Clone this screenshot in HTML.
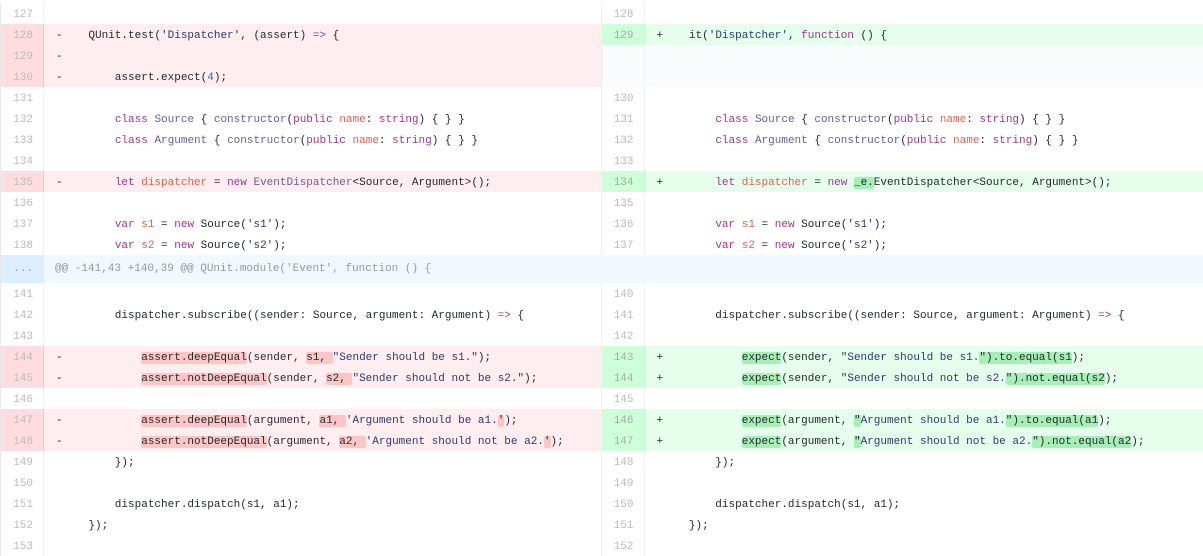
<!DOCTYPE html>
<html><head><meta charset="utf-8"><style>
*{margin:0;padding:0;box-sizing:border-box}
body{width:1203px;height:555px;overflow:hidden;background:#fff;font-family:"Liberation Mono","DejaVu Sans Mono",monospace;font-size:11px;color:#24292e}
.wrap{position:absolute;top:3px;left:0;width:1203px;border-left:1px solid #e8e8e8}
.row{display:flex;height:21px;line-height:25px;overflow:hidden}
.row.hk{height:28px;line-height:29px;background:#f1f8ff}
.half{position:relative;display:flex;width:601px;border-right:1px solid #eee}
.half.r{width:602px;border-right:none}
.g{width:43px;flex:none;text-align:right;padding-right:10px;color:#bbb;border-right:1px solid #eee}
.half.r .g{width:43px}
.c{position:relative;flex:1;padding-left:18px;white-space:pre}
.m{position:absolute;left:12px;top:0}
.del .g{background:#ffdce0;border-right-color:#f5c6c6;color:#bbb}
.del .c{background:#ffeef0}
.add .g{background:#cdffd8;border-right-color:#bef5cb;color:#aaa}
.add .c{background:#e6ffed}
.emp .g,.emp .c{background:#fafbfc}
.emp .g{border-right-color:#f2f2f2}
.hk .g{background:#dbedff;color:#999;border-right:1px solid #dbedff}
.hk .c{color:#999;padding-left:11px}
.k{color:#a0358f}.v{color:#e0604a}.t{color:#6a5c9a}.s{color:#2b3a6e}.n{color:#1e6fc0}.o{color:#a0358f}
.hd{background:#fdc6c6;border-radius:2px}
.ha{background:#a6f0b5;border-radius:2px}
</style></head><body><div class="wrap">

<div class="row"><div class="half"><div class="g">127</div><div class="c"></div></div><div class="half r"><div class="g">128</div><div class="c"></div></div></div>

<div class="row"><div class="half del"><div class="g">128</div><div class="c"><span class="m">-</span>    QUnit.test(<span class="s">'Dispatcher'</span>, (assert) <span class="o">=&gt;</span> {</div></div><div class="half r add"><div class="g">129</div><div class="c"><span class="m">+</span>    it(<span class="s">'Dispatcher'</span>, <span class="k">function</span> () {</div></div></div>

<div class="row"><div class="half del"><div class="g">129</div><div class="c"><span class="m">-</span></div></div><div class="half r emp"><div class="g"></div><div class="c"></div></div></div>

<div class="row"><div class="half del"><div class="g">130</div><div class="c"><span class="m">-</span>        assert.expect(<span class="n">4</span>);</div></div><div class="half r emp"><div class="g"></div><div class="c"></div></div></div>

<div class="row"><div class="half"><div class="g">131</div><div class="c"></div></div><div class="half r"><div class="g">130</div><div class="c"></div></div></div>

<div class="row"><div class="half"><div class="g">132</div><div class="c">        <span class="k">class</span> <span class="t">Source</span> { <span class="t">constructor</span>(<span class="k">public</span> <span class="v">name</span>: <span class="k">string</span>) { } }</div></div><div class="half r"><div class="g">131</div><div class="c">        <span class="k">class</span> <span class="t">Source</span> { <span class="t">constructor</span>(<span class="k">public</span> <span class="v">name</span>: <span class="k">string</span>) { } }</div></div></div>

<div class="row"><div class="half"><div class="g">133</div><div class="c">        <span class="k">class</span> <span class="t">Argument</span> { <span class="t">constructor</span>(<span class="k">public</span> <span class="v">name</span>: <span class="k">string</span>) { } }</div></div><div class="half r"><div class="g">132</div><div class="c">        <span class="k">class</span> <span class="t">Argument</span> { <span class="t">constructor</span>(<span class="k">public</span> <span class="v">name</span>: <span class="k">string</span>) { } }</div></div></div>

<div class="row"><div class="half"><div class="g">134</div><div class="c"></div></div><div class="half r"><div class="g">133</div><div class="c"></div></div></div>

<div class="row"><div class="half del"><div class="g">135</div><div class="c"><span class="m">-</span>        <span class="k">let</span> <span class="v">dispatcher</span> = <span class="k">new</span> <span class="t">EventDispatcher</span>&lt;Source, Argument&gt;();</div></div><div class="half r add"><div class="g">134</div><div class="c"><span class="m">+</span>        <span class="k">let</span> <span class="v">dispatcher</span> = <span class="k">new</span> <span class="ha">_e.</span>EventDispatcher&lt;Source, Argument&gt;();</div></div></div>

<div class="row"><div class="half"><div class="g">136</div><div class="c"></div></div><div class="half r"><div class="g">135</div><div class="c"></div></div></div>

<div class="row"><div class="half"><div class="g">137</div><div class="c">        <span class="k">var</span> <span class="v">s1</span> = <span class="k">new</span> Source(<span class="s">'s1'</span>);</div></div><div class="half r"><div class="g">136</div><div class="c">        <span class="k">var</span> <span class="v">s1</span> = <span class="k">new</span> Source(<span class="s">'s1'</span>);</div></div></div>

<div class="row"><div class="half"><div class="g">138</div><div class="c">        <span class="k">var</span> <span class="v">s2</span> = <span class="k">new</span> Source(<span class="s">'s2'</span>);</div></div><div class="half r"><div class="g">137</div><div class="c">        <span class="k">var</span> <span class="v">s2</span> = <span class="k">new</span> Source(<span class="s">'s2'</span>);</div></div></div>

<div class="row hk"><div class="half" style="border-right:none"><div class="g">...</div><div class="c">@@ -141,43 +140,39 @@ QUnit.module('Event', function () {</div></div><div class="half r"></div></div>

<div class="row"><div class="half"><div class="g">141</div><div class="c"></div></div><div class="half r"><div class="g">140</div><div class="c"></div></div></div>

<div class="row"><div class="half"><div class="g">142</div><div class="c">        dispatcher.subscribe((sender: Source, argument: Argument) <span class="o">=&gt;</span> {</div></div><div class="half r"><div class="g">141</div><div class="c">        dispatcher.subscribe((sender: Source, argument: Argument) <span class="o">=&gt;</span> {</div></div></div>

<div class="row"><div class="half"><div class="g">143</div><div class="c"></div></div><div class="half r"><div class="g">142</div><div class="c"></div></div></div>

<div class="row"><div class="half del"><div class="g">144</div><div class="c"><span class="m">-</span>            <span class="hd">assert.deepEqual</span>(sender, <span class="hd">s1, </span><span class="s">"Sender should be s1."</span>);</div></div><div class="half r add"><div class="g">143</div><div class="c"><span class="m">+</span>            <span class="ha">expect</span>(sender, <span class="s">"Sender should be s1.</span><span class="ha">").to.equal(s1</span>);</div></div></div>

<div class="row"><div class="half del"><div class="g">145</div><div class="c"><span class="m">-</span>            <span class="hd">assert.notDeepEqual</span>(sender, <span class="hd">s2, </span><span class="s">"Sender should not be s2."</span>);</div></div><div class="half r add"><div class="g">144</div><div class="c"><span class="m">+</span>            <span class="ha">expect</span>(sender, <span class="s">"Sender should not be s2.</span><span class="ha">").not.equal(s2</span>);</div></div></div>

<div class="row"><div class="half"><div class="g">146</div><div class="c"></div></div><div class="half r"><div class="g">145</div><div class="c"></div></div></div>

<div class="row"><div class="half del"><div class="g">147</div><div class="c"><span class="m">-</span>            <span class="hd">assert.deepEqual</span>(argument, <span class="hd">a1, </span><span class="s">'Argument should be a1.</span><span class="hd">'</span>);</div></div><div class="half r add"><div class="g">146</div><div class="c"><span class="m">+</span>            <span class="ha">expect</span>(argument, <span class="ha">"</span><span class="s">Argument should be a1.</span><span class="ha">").to.equal(a1</span>);</div></div></div>

<div class="row"><div class="half del"><div class="g">148</div><div class="c"><span class="m">-</span>            <span class="hd">assert.notDeepEqual</span>(argument, <span class="hd">a2, </span><span class="s">'Argument should not be a2.</span><span class="hd">'</span>);</div></div><div class="half r add"><div class="g">147</div><div class="c"><span class="m">+</span>            <span class="ha">expect</span>(argument, <span class="ha">"</span><span class="s">Argument should not be a2.</span><span class="ha">").not.equal(a2</span>);</div></div></div>

<div class="row"><div class="half"><div class="g">149</div><div class="c">        });</div></div><div class="half r"><div class="g">148</div><div class="c">        });</div></div></div>

<div class="row"><div class="half"><div class="g">150</div><div class="c"></div></div><div class="half r"><div class="g">149</div><div class="c"></div></div></div>

<div class="row"><div class="half"><div class="g">151</div><div class="c">        dispatcher.dispatch(s1, a1);</div></div><div class="half r"><div class="g">150</div><div class="c">        dispatcher.dispatch(s1, a1);</div></div></div>

<div class="row"><div class="half"><div class="g">152</div><div class="c">    });</div></div><div class="half r"><div class="g">151</div><div class="c">    });</div></div></div>

<div class="row"><div class="half"><div class="g">153</div><div class="c"></div></div><div class="half r"><div class="g">152</div><div class="c"></div></div></div>

</div></body></html>
